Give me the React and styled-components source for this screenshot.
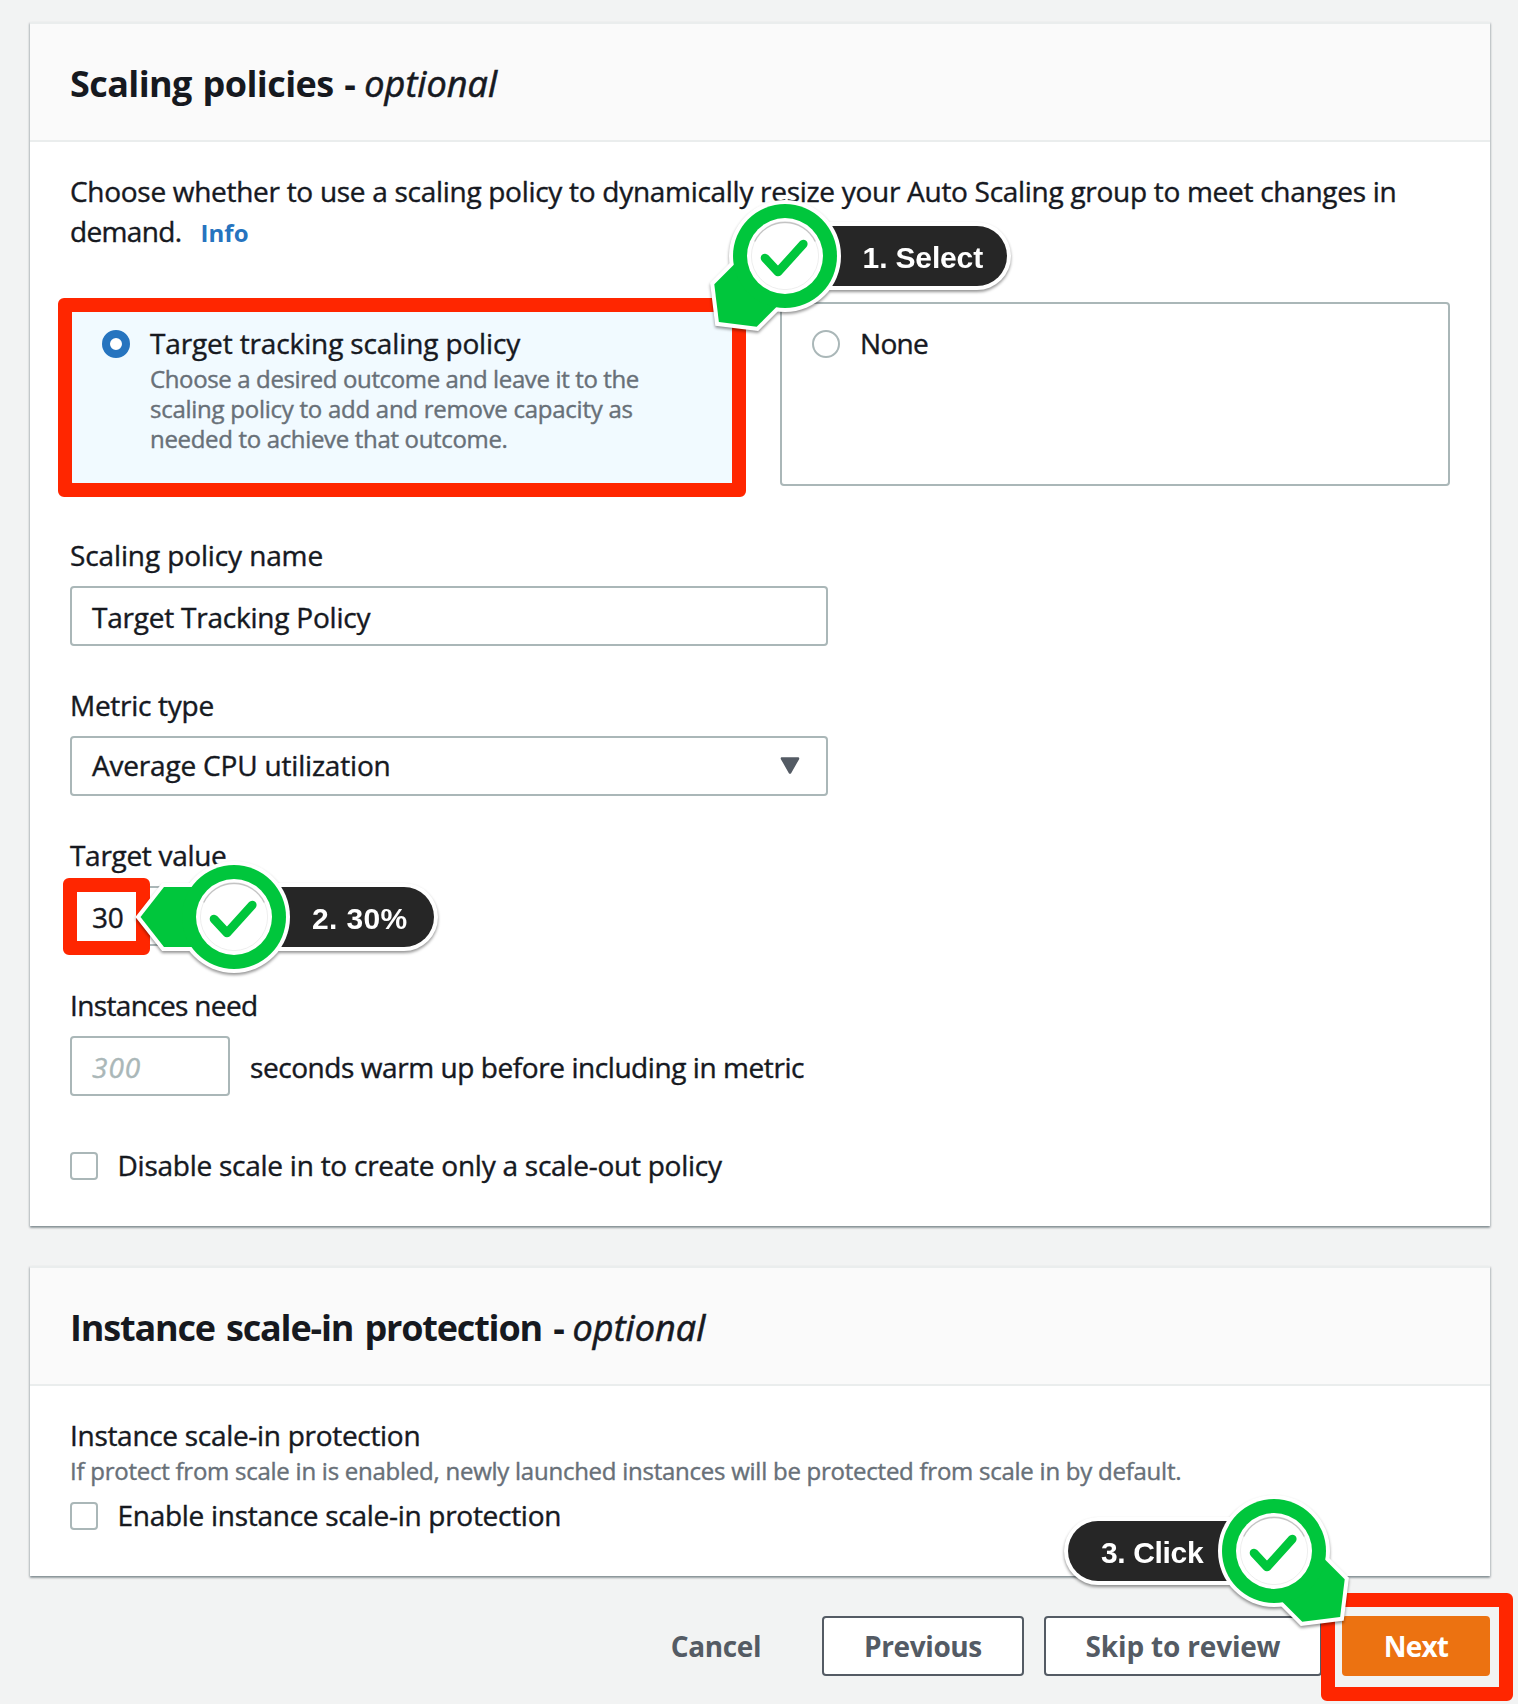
import React from "react";
import styled, { createGlobalStyle, css } from "styled-components";

const INK = "#16191f";
const MUTED = "#687078";
const SLATE = "#545b64";
const OUTLINE = "#aab7b8";
const BLUE = "#2674bf";
const RED = "#ff2600";
const GREEN = "#00c63c";

const GlobalStyle = createGlobalStyle`
  *, *::before, *::after { box-sizing: border-box; }
  body {
    margin: 0;
    background: #f2f3f3;
    color: ${INK};
    font-family: "Open Sans", "Noto Sans", sans-serif;
    font-size: 28px;
    line-height: 40px;
  }
`;

const Page = styled.main`
  position: relative;
  display: flex;
  flex-direction: column;
  width: 1518px;
  height: 1704px;
  padding: 22px 28px 0 30px;
  overflow: hidden;
  background: #f2f3f3;
`;

const Text = styled.span`
  display: block;
  white-space: nowrap;
  letter-spacing: ${(p) => p.$track ?? -0.25}px;
  -webkit-text-stroke: 0.4px currentColor;
`;

const Panel = styled.section`
  display: flex;
  flex-direction: column;
  height: ${(p) => p.$height}px;
  margin-bottom: 40px;
  background: #fff;
  border-top: 2px solid #eaeded;
  box-shadow: 0 2px 2px 0 rgba(0, 28, 36, 0.3), 1px 1px 2px 0 rgba(0, 28, 36, 0.15),
    -1px 1px 2px 0 rgba(0, 28, 36, 0.15);
`;

const PanelHeader = styled.header`
  display: flex;
  align-items: center;
  gap: 9px;
  height: 118px;
  padding: 4px 40px 0;
  background: #fafafa;
  border-bottom: 2px solid #eaeded;
  line-height: 44px;
`;

const Title = styled.h2`
  margin: 0;
  font-size: 36px;
  font-weight: 700;
  white-space: nowrap;
  letter-spacing: ${(p) => p.$track}px;
  word-spacing: ${(p) => p.$words}px;
`;

const Optional = styled.em`
  font-size: 36px;
  font-style: italic;
  font-weight: 400;
  letter-spacing: 0.05px;
  -webkit-text-stroke: 0.6px currentColor;
`;

const PanelBody = styled.div`
  display: flex;
  flex-direction: column;
  padding: 29px 40px 0;
`;

const Inline = styled.div`
  display: flex;
  align-items: center;
  gap: ${(p) => p.$gap}px;
`;

const InfoLink = styled.a`
  color: ${BLUE};
  font-size: 24px;
  font-weight: 700;
  letter-spacing: 0.1px;
  margin: 2px 0 -2px;
`;

const Tiles = styled.div`
  display: grid;
  grid-template-columns: 1fr 1fr;
  gap: 40px;
  height: 184px;
  margin: 51px 0 49px;
`;

const Tile = styled.div`
  display: flex;
  gap: 20px;
  padding: 19px 30px;
  border: 2px solid ${OUTLINE};
  border-radius: 4px;
  background: ${(p) => (p.$selected ? "#f1faff" : "#fff")};
`;

const Radio = styled.span`
  flex: none;
  width: 28px;
  height: 28px;
  margin-top: 7px;
  border-radius: 50%;
  background: #fff;
  border: ${(p) => (p.$checked ? `8px solid ${BLUE}` : `2px solid ${OUTLINE}`)};
`;

const Hint = styled.div`
  display: flex;
  flex-direction: column;
  padding-top: 1px;
  color: ${MUTED};
  font-size: 24px;
  line-height: 30px;
`;

const Field = styled.div`
  display: flex;
  flex-direction: column;
  gap: 11px;
  height: 150px;
`;

const Control = styled.div`
  display: flex;
  align-items: center;
  justify-content: space-between;
  width: ${(p) => p.$width}px;
  height: 60px;
  padding: ${(p) => (p.$lift ? "0 26px 2px 20px" : "2px 20px 0 20px")};
  border: 2px solid ${OUTLINE};
  border-radius: 4px;
  background: #fff;
  ${(p) =>
    p.$placeholder &&
    css`
      color: ${OUTLINE};
      font-style: italic;
    `}
`;

const Suffix = styled.div`
  padding-top: 2px;
`;

const CheckRow = styled.div`
  display: flex;
  align-items: center;
  gap: 19.5px;
  height: 40px;
  margin-top: ${(p) => p.$top}px;
`;

const Checkbox = styled.span`
  width: 28px;
  height: 28px;
  margin-top: 2px;
  border: 2px solid ${OUTLINE};
  border-radius: 4px;
  background: #fff;
`;

const Actions = styled.footer`
  display: flex;
  justify-content: flex-end;
  gap: 20px;
`;

const Button = styled.button`
  display: flex;
  align-items: center;
  justify-content: center;
  width: ${(p) => p.$width}px;
  height: 60px;
  padding: 0 0 1px;
  font: 700 28px/40px "Open Sans", "Noto Sans", sans-serif;
  letter-spacing: ${(p) => p.$track}px;
  white-space: nowrap;
  border: 2px solid transparent;
  border-radius: 4px;
  color: ${SLATE};
  background: transparent;
  ${(p) =>
    p.$kind === "normal" &&
    css`
      border-color: ${SLATE};
      background: #fff;
    `}
  ${(p) =>
    p.$kind === "primary" &&
    css`
      border-color: #ec7211;
      color: #fff;
      background: #ec7211;
    `}
`;

const Highlight = styled.div`
  position: absolute;
  left: ${(p) => p.$x}px;
  top: ${(p) => p.$y}px;
  width: ${(p) => p.$w}px;
  height: ${(p) => p.$h}px;
  border: 14px solid ${RED};
  border-radius: 6px;
`;

const Callout = styled.div`
  position: absolute;
  left: ${(p) => p.$x}px;
  top: ${(p) => p.$y}px;
  width: 0;
  height: 0;
  filter: drop-shadow(0 2px 1.5px rgba(0, 0, 0, 0.42));
`;

const Pill = styled.div`
  position: absolute;
  top: -30px;
  ${(p) => (p.$side === "left" ? "right" : "left")}: 0;
  display: flex;
  align-items: center;
  justify-content: ${(p) => (p.$side === "left" ? "flex-start" : "flex-end")};
  width: ${(p) => p.$width}px;
  height: 60px;
  padding: ${(p) => (p.$side === "left" ? `4px 0 0 ${p.$pad}px` : `4px ${p.$pad}px 0 0`)};
  border-radius: 30px;
  background: #262626;
  box-shadow: 0 0 0 4px #fff;
  color: #fff;
  font: 700 30px/40px "Liberation Sans", Arial, sans-serif;
  letter-spacing: ${(p) => p.$track}px;
  white-space: nowrap;
`;

const PinArt = styled.svg`
  position: absolute;
  left: -110px;
  top: -110px;
  width: 220px;
  height: 220px;
`;

function Pin({ angle }) {
  const pointer = "-93.5,0 -70,-30 0,-30 0,30 -70,30";
  return (
    <PinArt viewBox="-110 -110 220 220" aria-hidden="true">
      <g transform={`rotate(${angle})`}>
        <polygon points={pointer} fill="#fff" stroke="#fff" strokeWidth="8" />
        <circle r="56" fill="#fff" />
        <polygon points={pointer} fill={GREEN} />
      </g>
      <circle r="52" fill={GREEN} />
      <circle r="38" fill="#fff" />
      <circle r="33.6" fill="none" stroke="#000" strokeOpacity="0.07" strokeWidth="1" />
      <path d="M-30.3 -14.5A33.6 33.6 0 0 1 30.3 -14.5" fill="none" stroke="#000" strokeOpacity="0.18" strokeWidth="1.6" />
      <path
        d="M-20 2L-7 16L18.3 -12"
        fill="none"
        stroke={GREEN}
        strokeWidth="8.6"
        strokeLinecap="round"
        strokeLinejoin="round"
      />
    </PinArt>
  );
}

function Caret() {
  return (
    <svg width="20" height="17" viewBox="0 0 20 17" aria-hidden="true">
      <path d="M2 1.5H18L10 15.5Z" fill={SLATE} stroke={SLATE} strokeWidth="2.6" strokeLinejoin="round" />
    </svg>
  );
}

export default function App() {
  return (
    <>
      <GlobalStyle />
      <Page>
        <Panel $height={1204}>
          <PanelHeader>
            <Title $track={-0.6} $words={2}>Scaling policies -</Title>
            <Optional>optional</Optional>
          </PanelHeader>
          <PanelBody>
            <Text $track={-0.29}>
              Choose whether to use a scaling policy to dynamically resize your Auto Scaling group to meet changes in
            </Text>
            <Inline $gap={19}>
              <Text $track={-0.65}>demand.</Text>
              <InfoLink>Info</InfoLink>
            </Inline>

            <Tiles>
              <Tile $selected>
                <Radio $checked />
                <div>
                  <Text $track={-0.13}>Target tracking scaling policy</Text>
                  <Hint>
                    <Text $track={-0.37}>Choose a desired outcome and leave it to the</Text>
                    <Text $track={-0.26}>scaling policy to add and remove capacity as</Text>
                    <Text $track={-0.33}>needed to achieve that outcome.</Text>
                  </Hint>
                </div>
              </Tile>
              <Tile>
                <Radio />
                <Text $track={-0.7}>None</Text>
              </Tile>
            </Tiles>

            <Field>
              <Text $track={-0.12}>Scaling policy name</Text>
              <Control $width={758}>
                <Text $track={-0.22}>Target Tracking Policy</Text>
              </Control>
            </Field>
            <Field>
              <Text $track={-0.28}>Metric type</Text>
              <Control $width={758} $lift>
                <Text $track={-0.19}>Average CPU utilization</Text>
                <Caret />
              </Control>
            </Field>
            <Field>
              <Text $track={-0.3}>Target value</Text>
              <Control $width={160}>
                <Text>30</Text>
              </Control>
            </Field>
            <Field>
              <Text $track={-0.65}>Instances need</Text>
              <Inline $gap={20}>
                <Control $width={160} $placeholder>
                  <Text $track={1}>300</Text>
                </Control>
                <Suffix>
                  <Text $track={-0.43}>seconds warm up before including in metric</Text>
                </Suffix>
              </Inline>
            </Field>
            <CheckRow $top={10}>
              <Checkbox />
              <Text $track={-0.25}>Disable scale in to create only a scale-out policy</Text>
            </CheckRow>
          </PanelBody>
        </Panel>

        <Panel $height={310}>
          <PanelHeader>
            <Title $track={-1.18} $words={3}>Instance scale-in protection -</Title>
            <Optional>optional</Optional>
          </PanelHeader>
          <PanelBody>
            <Text $track={-0.3}>Instance scale-in protection</Text>
            <Hint>
              <Text $track={-0.25}>
                If protect from scale in is enabled, newly launched instances will be protected from scale in by default.
              </Text>
            </Hint>
            <CheckRow $top={9}>
              <Checkbox />
              <Text $track={-0.28}>Enable instance scale-in protection</Text>
            </CheckRow>
          </PanelBody>
        </Panel>

        <Actions>
          <Button $width={172} $track={-0.35}>Cancel</Button>
          <Button $width={202} $track={-0.4} $kind="normal">Previous</Button>
          <Button $width={278} $track={-0.18} $kind="normal">Skip to review</Button>
          <Button $width={148} $track={-0.8} $kind="primary">Next</Button>
        </Actions>

        <Highlight $x={57.5} $y={298} $w={688} $h={199} />
        <Highlight $x={63} $y={878} $w={86.5} $h={77} />
        <Highlight $x={1321} $y={1593} $w={191.5} $h={107.5} />

        <Callout $x={784.5} $y={256}>
          <Pill $width={222.5} $pad={24} $track={-0.15}>1. Select</Pill>
          <Pin angle={-45} />
        </Callout>
        <Callout $x={234} $y={917}>
          <Pill $width={199.5} $pad={26} $track={0.35}>2. 30%</Pill>
          <Pin angle={0} />
        </Callout>
        <Callout $x={1274} $y={1550.6}>
          <Pill $side="left" $width={206} $pad={33} $track={-0.35}>3. Click</Pill>
          <Pin angle={-135} />
        </Callout>
      </Page>
    </>
  );
}
